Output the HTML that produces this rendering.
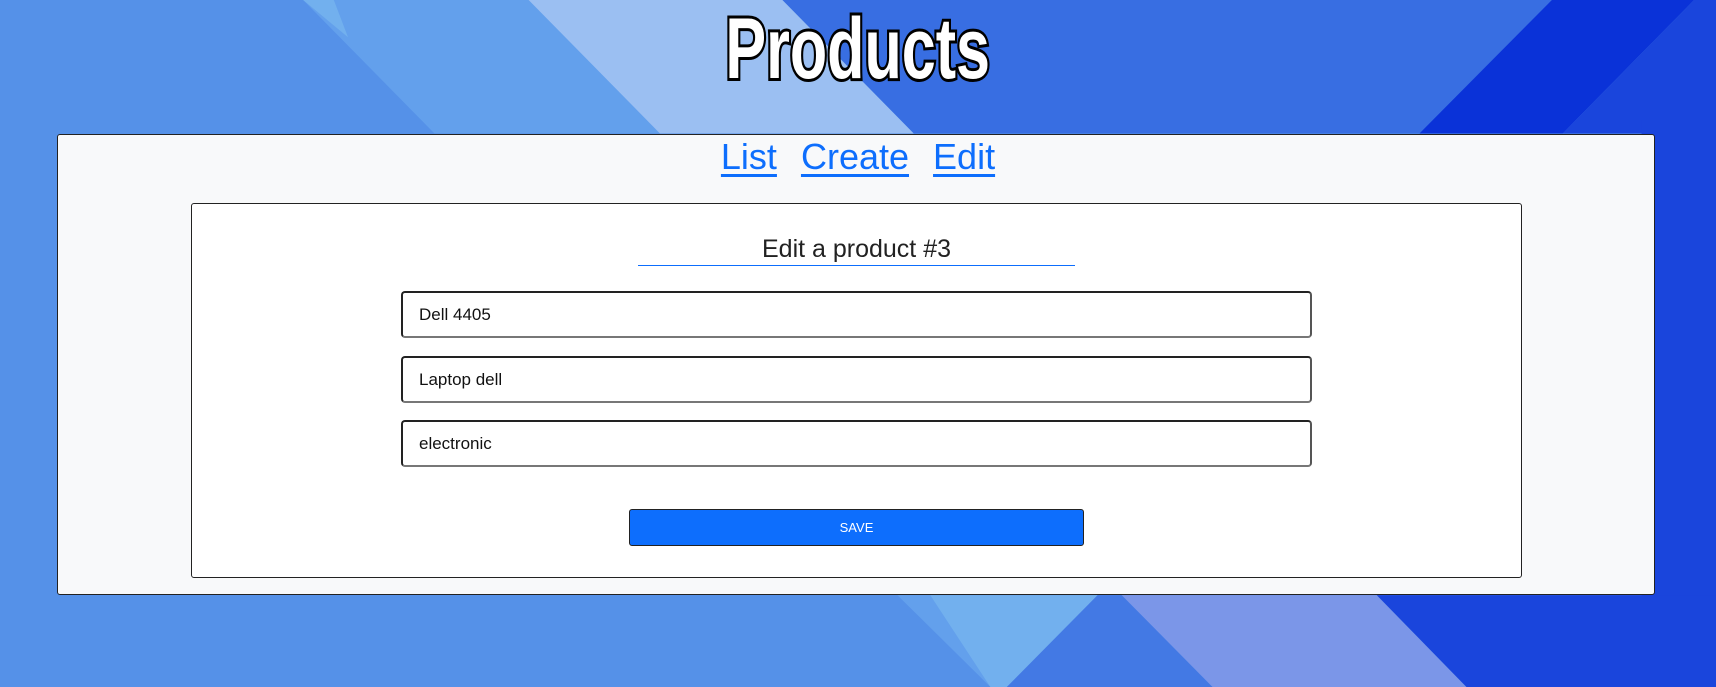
<!DOCTYPE html>
<html><head><meta charset="utf-8"><style>
html,body{margin:0;padding:0;width:1716px;height:687px;overflow:hidden;font-family:"Liberation Sans",sans-serif;background:#5591e8;position:relative}
svg.bg{position:absolute;left:0;top:0}
.title{position:absolute;left:0;width:1716px;top:-1px;text-align:center;font-size:86px;font-weight:bold;color:#fff;line-height:100px;-webkit-text-stroke:6px #000;paint-order:stroke fill;transform:scaleX(0.71);transform-origin:857px 0}
.card{position:absolute;left:57px;top:134px;width:1596px;height:459px;background:#f8f9fa;border:1px solid #222;border-radius:3px}
.nav{position:absolute;left:0;width:1716px;top:132px;text-align:center;font-size:36px;line-height:50px}
.nav a{color:#0d6efd;text-decoration:underline;margin:0 7px;text-decoration-thickness:3px;text-underline-offset:5px}
.inner{position:absolute;left:191px;top:203px;width:1329px;height:373px;background:#fff;border:1px solid #222;border-radius:3px}
.h{position:absolute;left:638px;width:437px;top:233px;text-align:center;font-size:25px;color:#222;line-height:32px}
.ul{position:absolute;left:638px;width:437px;top:265px;height:1px;background:#0d6efd}
.in{position:absolute;left:401px;height:43px;border:2px solid #222;border-bottom-color:#777;border-right-color:#555;border-radius:4px;background:#fff;font-size:17px;line-height:43px;padding-left:16px;box-sizing:content-box;width:891px;color:#111}
.btn{position:absolute;left:629px;top:509px;width:453px;height:35px;background:#0d6efd;border:1px solid #222;border-radius:3px;color:#fff;font-size:13px;text-align:center;line-height:35px}
</style></head><body>
<svg class="bg" width="1716" height="687" viewBox="0 0 1568 628" preserveAspectRatio="none">
<rect width="1568" height="628" fill="#5591e8"/>
<polygon points="277,0 483,0 603,122 397,122" fill="#63a0ec"/>
<polygon points="277,0 305,0 318,34" fill="#72b0ee"/>
<polygon points="483,0 715,0 835,122 603,122" fill="#9bbff2"/>
<polygon points="715,0 1418,0 1297,122 835,122" fill="#386ee2"/>
<polygon points="1418,0 1548,0 1428,122 1297,122" fill="#0a32d8"/>
<polygon points="1548,0 1568,0 1568,122 1428,122" fill="#1a45dc"/>
<rect x="1500" y="110" width="68" height="450" fill="#1a45dc"/>
<polygon points="820,544 850,544 912,628 905,628" fill="#63a0ec"/>
<polygon points="850,544 1003,544 920,628 905,628" fill="#72b0ee"/>
<polygon points="1003,544 1025,544 1108,628 920,628" fill="#4379e4"/>
<polygon points="1025,544 1258,544 1340,628 1108,628" fill="#7b96e8"/>
<polygon points="1258,544 1568,544 1568,628 1340,628" fill="#1a45dc"/>
</svg>
<div class="title">Products</div>
<div class="card"></div>
<div class="nav"><a>List</a> <a>Create</a> <a>Edit</a></div>
<div class="inner"></div>
<div class="h">Edit a product #3</div>
<div class="ul"></div>
<div class="in" style="top:291px">Dell 4405</div>
<div class="in" style="top:356px">Laptop dell</div>
<div class="in" style="top:420px">electronic</div>
<div class="btn">SAVE</div>
</body></html>
